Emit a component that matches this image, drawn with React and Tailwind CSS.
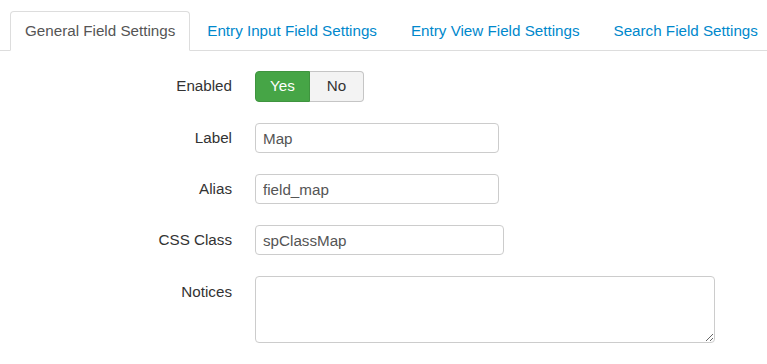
import { useState } from "react";

const tabs = [
    "General Field Settings",
    "Entry Input Field Settings",
    "Entry View Field Settings",
    "Search Field Settings",
];

function Row({ label, children, top = false }) {
    return (
        <div className={`flex gap-[23px] ${top ? "items-start" : "items-center"}`}>
            <label className={`w-[232px] shrink-0 text-right text-[15.2px] text-[#333] ${top ? "pt-[5px]" : ""}`}>
                {label}
            </label>
            {children}
        </div>
    );
}

export default function App() {
    const [active, setActive] = useState(0);
    const [enabled, setEnabled] = useState(true);

    return (
        <div className="w-[767px] h-[364px] bg-white overflow-hidden" style={{ fontFamily: '"Liberation Sans", Arial, sans-serif' }}>
            <ul className="flex pt-[11px] pl-[10px] border-b border-[#ddd]">
                {tabs.map((t, i) => (
                    <li key={t} className="-mb-px shrink-0">
                        <button
                            type="button"
                            onClick={() => setActive(i)}
                            className={
                                i === active
                                    ? "h-[40px] pt-px px-[14px] whitespace-nowrap bg-white border border-[#ddd] border-b-white rounded-t-[4px] text-[15.2px] text-[#555]"
                                    : "h-[40px] pt-px px-4 whitespace-nowrap border border-transparent text-[15.2px] text-[#0088cc]"
                            }
                        >
                            {t}
                        </button>
                    </li>
                ))}
            </ul>

            <div className="mt-[20px] flex flex-col gap-[21px]">
                <Row label="Enabled">
                    <div className="flex h-[31px] text-[15.2px]">
                        <button
                            type="button"
                            onClick={() => setEnabled(true)}
                            className={`w-[55px] rounded-l-[4px] border ${enabled ? "bg-[#46a546] border-[#3f943f] text-white" : "bg-[#f3f3f3] border-[#c5c5c5] text-[#333]"}`}
                        >
                            Yes
                        </button>
                        <button
                            type="button"
                            onClick={() => setEnabled(false)}
                            className={`w-[54px] rounded-r-[4px] border border-l-0 ${!enabled ? "bg-[#bd362f] border-[#a52e28] text-white" : "bg-[#f3f3f3] border-[#c5c5c5] text-[#333]"}`}
                        >
                            No
                        </button>
                    </div>
                </Row>
                <Row label="Label">
                    <input defaultValue="Map" className="w-[244px] h-[30px] px-[7px] border border-[#ccc] rounded-[4px] text-[15.2px] text-[#555] outline-none" />
                </Row>
                <Row label="Alias">
                    <input defaultValue="field_map" className="w-[244px] h-[30px] px-[7px] border border-[#ccc] rounded-[4px] text-[15.2px] text-[#555] outline-none" />
                </Row>
                <Row label="CSS Class">
                    <input defaultValue="spClassMap" className="w-[249px] h-[30px] px-[7px] border border-[#ccc] rounded-[4px] text-[15.2px] text-[#555] outline-none" />
                </Row>
                <Row label="Notices" top>
                    <textarea className="w-[460px] h-[67px] px-[7px] py-[5px] border border-[#ccc] rounded-[4px] text-[15.2px] text-[#555] outline-none" />
                </Row>
            </div>
        </div>
    );
}
